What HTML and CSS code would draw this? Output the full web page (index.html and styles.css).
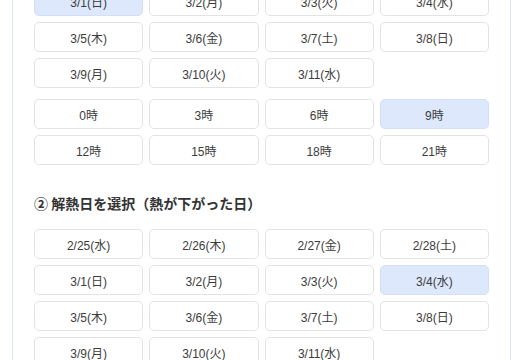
FILE: index.html
```html
<!DOCTYPE html>
<html lang="ja">
<head>
<meta charset="utf-8">
<link rel="stylesheet" href="styles.css">
</head>
<body>
<div class="card">
  <div class="grid dates">
    <button class="opt sel">3/1(日)</button>
    <button class="opt">3/2(月)</button>
    <button class="opt">3/3(火)</button>
    <button class="opt">3/4(水)</button>
    <button class="opt">3/5(木)</button>
    <button class="opt">3/6(金)</button>
    <button class="opt">3/7(土)</button>
    <button class="opt">3/8(日)</button>
    <button class="opt">3/9(月)</button>
    <button class="opt">3/10(火)</button>
    <button class="opt">3/11(水)</button>
  </div>
  <div class="grid hours">
    <button class="opt">0時</button>
    <button class="opt">3時</button>
    <button class="opt">6時</button>
    <button class="opt sel">9時</button>
    <button class="opt">12時</button>
    <button class="opt">15時</button>
    <button class="opt">18時</button>
    <button class="opt">21時</button>
  </div>
  <h2 class="step">② 解熱日を選択（熱が下がった日）</h2>
  <div class="grid dates">
    <button class="opt">2/25(水)</button>
    <button class="opt">2/26(木)</button>
    <button class="opt">2/27(金)</button>
    <button class="opt">2/28(土)</button>
    <button class="opt">3/1(日)</button>
    <button class="opt">3/2(月)</button>
    <button class="opt">3/3(火)</button>
    <button class="opt sel">3/4(水)</button>
    <button class="opt">3/5(木)</button>
    <button class="opt">3/6(金)</button>
    <button class="opt">3/7(土)</button>
    <button class="opt">3/8(日)</button>
    <button class="opt">3/9(月)</button>
    <button class="opt">3/10(火)</button>
    <button class="opt">3/11(水)</button>
  </div>
</div>
</body>
</html>
```

FILE: styles.css
```css
html, body {
  margin: 0;
  padding: 0;
  background: #ffffff;
  overflow: hidden;
}
body {
  font-family: "Liberation Sans", "Noto Sans CJK JP", sans-serif;
  color: #333333;
  padding: 0 13px 0 12px;
}
.card {
  margin-top: -14px;
  background: #ffffff;
  border-left: 1px solid #dbe6fb;
  border-right: 1px solid #dbe6fb;
  padding: 0 21px 40px 21px;
  min-height: 420px;
}
.grid {
  display: grid;
  grid-template-columns: repeat(4, 1fr);
  gap: 6px;
}
.hours {
  margin-top: 11px;
}
.opt {
  height: 30px;
  margin: 0;
  padding: 0;
  display: flex;
  align-items: center;
  justify-content: center;
  font-family: inherit;
  font-size: 12px;
  color: #3c3c3c;
  background: #ffffff;
  border: 1px solid #e3e3e3;
  border-radius: 5px;
}
.opt.sel {
  background: #dde8fc;
  border-color: #d3dff5;
}
.step {
  margin: 28px 0 16px 0;
  font-family: "Noto Sans CJK JP", sans-serif;
  font-size: 14px;
  line-height: 20px;
  font-weight: 700;
  color: #333333;
}
```
